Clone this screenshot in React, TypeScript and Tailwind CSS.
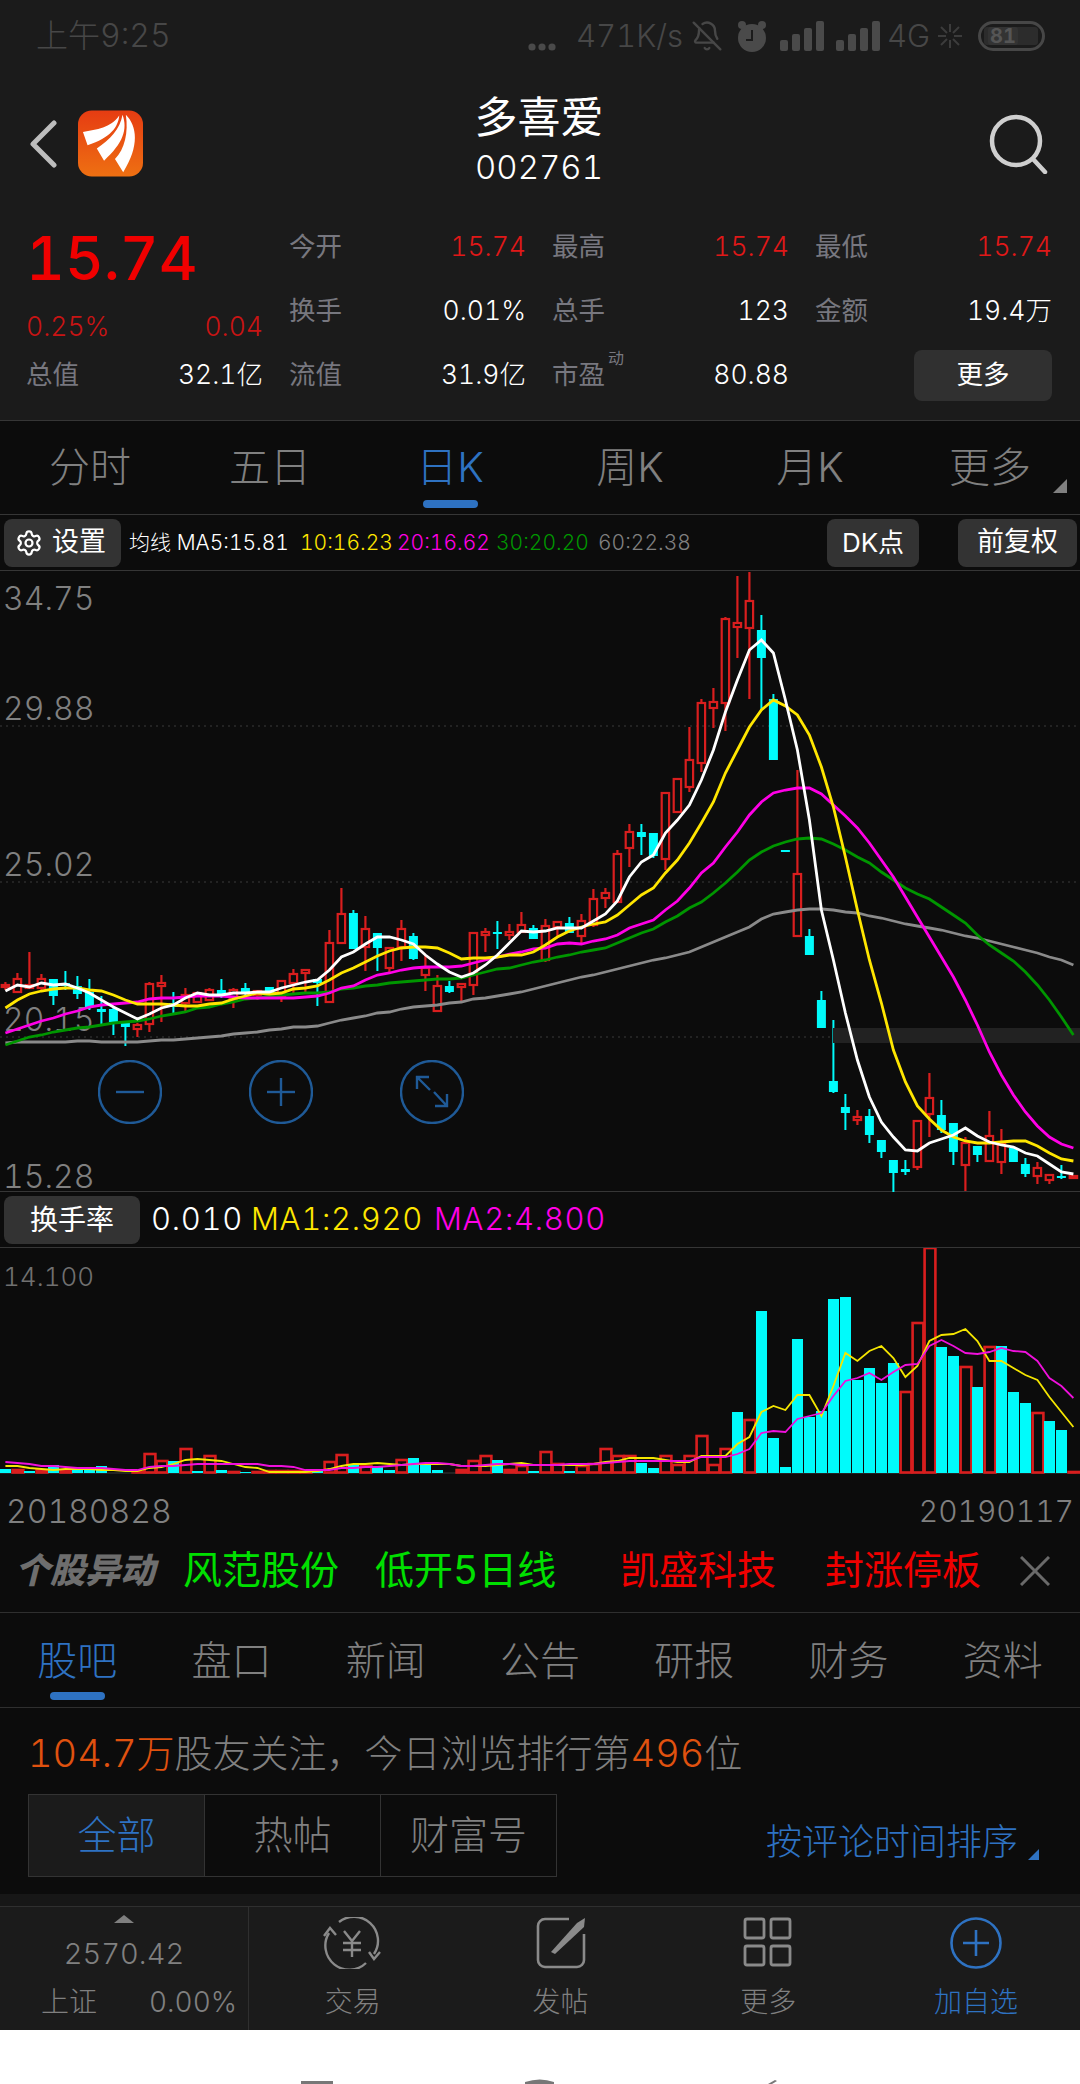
import { BellOff, Settings } from 'lucide-react';

// [high, bodyTop, bodyBottom, low, isRed]
const candles: [number, number, number, number, number][] = [
  [982, 985, 987, 990, 1], [973, 979, 992, 992, 1], [952, 985, 988, 989, 1], [974, 979, 988, 990, 1], [979, 979, 996, 1005, 0],
  [971, 983, 986, 990, 0], [976, 986, 994, 999, 0], [979, 992, 1007, 1010, 0], [996, 1009, 1012, 1024, 0], [1008, 1009, 1022, 1035, 0],
  [1023, 1023, 1027, 1046, 0], [1023, 1025, 1029, 1037, 1], [982, 984, 1024, 1032, 1], [975, 983, 986, 1022, 1], [992, 1003, 1007, 1014, 0],
  [988, 995, 1003, 1012, 1], [993, 993, 1002, 1003, 1], [988, 990, 1000, 1001, 1], [979, 990, 995, 998, 0], [988, 990, 1000, 1008, 1],
  [983, 988, 993, 995, 0], [990, 991, 995, 1000, 1], [987, 987, 993, 995, 0], [981, 981, 997, 1002, 1], [969, 974, 983, 993, 1],
  [970, 970, 973, 993, 1], [979, 979, 983, 1006, 0], [930, 943, 1002, 1003, 1], [888, 914, 943, 944, 1], [910, 913, 949, 949, 0],
  [916, 929, 947, 971, 1], [933, 933, 948, 971, 0], [947, 948, 968, 972, 1], [920, 929, 947, 961, 1], [933, 936, 959, 960, 0],
  [955, 968, 975, 991, 1], [975, 986, 1011, 1012, 1], [981, 986, 992, 993, 0], [984, 984, 987, 1001, 1], [933, 933, 985, 995, 1],
  [928, 932, 935, 952, 1], [921, 932, 934, 949, 0], [924, 932, 935, 940, 1], [912, 925, 932, 933, 1], [925, 928, 939, 939, 0],
  [919, 926, 960, 962, 1], [921, 922, 927, 938, 1], [917, 923, 933, 933, 0], [914, 921, 936, 943, 1], [889, 899, 925, 927, 1],
  [888, 893, 898, 908, 1], [850, 854, 902, 902, 1], [824, 832, 848, 867, 1], [824, 832, 837, 855, 0], [833, 833, 856, 858, 0],
  [793, 793, 859, 870, 1], [778, 779, 812, 812, 1], [727, 760, 787, 792, 1], [699, 703, 763, 772, 1], [688, 702, 708, 728, 1],
  [617, 619, 703, 731, 1], [576, 623, 627, 658, 1], [572, 601, 628, 699, 1], [615, 630, 658, 710, 0], [694, 699, 760, 760, 0],
  [850, 850, 852, 852, 0], [770, 874, 936, 936, 1], [929, 936, 955, 955, 0], [991, 1000, 1028, 1028, 0], [1020, 1081, 1092, 1093, 0],
  [1094, 1107, 1113, 1130, 0], [1110, 1117, 1120, 1125, 1], [1109, 1116, 1135, 1143, 0], [1140, 1140, 1152, 1158, 0], [1160, 1160, 1173, 1192, 0],
  [1160, 1169, 1172, 1175, 0], [1121, 1121, 1167, 1170, 1], [1073, 1098, 1114, 1137, 1], [1100, 1115, 1130, 1133, 0], [1123, 1123, 1152, 1165, 0],
  [1137, 1143, 1165, 1191, 1], [1146, 1146, 1155, 1162, 0], [1111, 1136, 1161, 1162, 1], [1129, 1144, 1162, 1174, 1], [1148, 1148, 1162, 1162, 0],
  [1158, 1164, 1174, 1177, 0], [1162, 1168, 1176, 1184, 1], [1175, 1175, 1180, 1184, 1], [1165, 1176, 1178, 1179, 0], [1176, 1176, 1178, 1178, 1],
];

const ma5 = [
  991, 985, 987, 983, 985, 984, 988, 993, 1000, 1007, 1013, 1019, 1014, 1008, 1005, 998, 993, 995, 995, 993, 993, 992, 992, 988, 985, 982, 980, 970, 957, 952, 944, 937, 937, 940, 944, 955, 964, 972, 977, 973, 965, 955, 943, 931, 932,
  931, 928, 928, 928, 921, 914, 901, 877, 862, 855, 833, 820, 805, 780, 750, 712, 680, 650, 640, 653, 700, 750, 820, 910, 960, 1013, 1060, 1097, 1122, 1137, 1150, 1151, 1143, 1139, 1135, 1128, 1136, 1142, 1145, 1147, 1153, 1156, 1164, 1172, 1174,
];
const ma10 = [
  1008, 1000, 994, 991, 989, 988, 988, 990, 991, 995, 1000, 1004, 1004, 1004, 1005, 1006, 1006, 1004, 1003, 999, 996, 993, 994, 993, 989, 988, 986, 980, 973, 968, 962, 956, 951, 948, 947, 947, 948, 953, 959, 958, 958, 957, 955, 955, 952,
  945, 937, 931, 927, 924, 922, 915, 905, 895, 888, 873, 860, 843, 823, 802, 773, 750, 727, 710, 700, 706, 715, 735, 767, 807, 857, 910, 960, 1003, 1050, 1082, 1106, 1119, 1130, 1137, 1141, 1143, 1143, 1142, 1141, 1141, 1146, 1153, 1159, 1161,
];
const ma20 = [
  1033, 1029, 1025, 1021, 1018, 1014, 1011, 1007, 1005, 1004, 1003, 1002, 999, 998, 998, 997, 996, 996, 996, 997, 998, 998, 998, 998, 998, 997, 996, 993, 988, 986, 980, 975, 973, 970, 968, 967, 967, 967, 966, 963, 960, 957, 954, 952, 949,
  948, 944, 943, 944, 941, 939, 935, 928, 924, 920, 910, 901, 888, 873, 863, 847, 832, 815, 802, 793, 790, 788, 788, 794, 805, 816, 828, 843, 860, 877, 897, 917, 937, 957, 977, 1000, 1025, 1052, 1075, 1095, 1112, 1126, 1137, 1144, 1148,
];
const ma30 = [
  1045, 1041, 1037, 1035, 1032, 1030, 1028, 1027, 1025, 1023, 1022, 1021, 1019, 1016, 1014, 1012, 1008, 1007, 1004, 1002, 999, 998, 996, 995, 994, 993, 993, 992, 989, 988, 986, 985, 983, 982, 981, 980, 979, 979, 978, 975, 972, 969, 968, 965, 962,
  960, 957, 955, 952, 950, 948, 943, 938, 933, 929, 922, 916, 908, 902, 893, 883, 872, 860, 852, 846, 842, 839, 838, 839, 844, 850, 857, 863, 872, 880, 888, 894, 899, 907, 915, 923, 935, 945, 953, 961, 972, 985, 1000, 1017, 1035,
];
const ma60 = [
  1043, 1042, 1042, 1042, 1042, 1042, 1041, 1041, 1042, 1042, 1042, 1042, 1041, 1040, 1040, 1039, 1038, 1037, 1036, 1034, 1033, 1032, 1030, 1029, 1027, 1027, 1026, 1023, 1020, 1018, 1016, 1013, 1012, 1009, 1007, 1006, 1005, 1003, 1002, 999, 998, 996, 994, 992, 989,
  986, 983, 980, 977, 975, 972, 969, 966, 963, 960, 958, 955, 952, 947, 942, 937, 932, 927, 919, 914, 912, 910, 909, 909, 910, 912, 913, 916, 918, 921, 924, 926, 928, 930, 933, 936, 938, 941, 944, 947, 950, 953, 957, 960, 965,
];

// [top, isRed] - turnover bars
const bars: [number, number][] = [
  [1470, 0], [1471, 1], [1472, 0], [1471, 1], [1466, 0], [1472, 1], [1470, 0], [1470, 0], [1467, 0], [1474, 0], [1474, 0], [1473, 1], [1455, 1], [1462, 1], [1462, 0],
  [1450, 1], [1472, 0], [1457, 1], [1471, 0], [1473, 1], [1473, 0], [1473, 1], [1472, 1], [1472, 1], [1472, 1], [1472, 1], [1472, 0], [1463, 1], [1456, 1], [1466, 0],
  [1467, 1], [1467, 0], [1471, 0], [1461, 1], [1459, 0], [1465, 0], [1471, 0], [1474, 0], [1471, 1], [1462, 1], [1457, 1], [1461, 0], [1471, 1], [1467, 1], [1472, 0],
  [1453, 1], [1465, 1], [1472, 0], [1467, 1], [1465, 1], [1450, 1], [1457, 1], [1457, 1], [1464, 0], [1469, 0], [1457, 1], [1466, 1], [1457, 1], [1437, 1], [1466, 1],
  [1450, 1], [1413, 0], [1421, 1], [1312, 0], [1439, 0], [1468, 0], [1340, 0], [1418, 0], [1412, 0], [1300, 0], [1298, 0], [1381, 0], [1369, 0], [1384, 0], [1364, 0],
  [1393, 1], [1324, 1], [1249, 1], [1348, 0], [1357, 0], [1368, 1], [1388, 0], [1348, 1], [1347, 0], [1393, 0], [1404, 0], [1414, 1], [1422, 0], [1431, 0], [1473, 1],
];
const volMa1 = [
  1467, 1467, 1469, 1470, 1471, 1470, 1470, 1470, 1471, 1471, 1472, 1472, 1469, 1468, 1465, 1461, 1460, 1461, 1462, 1465, 1468, 1469, 1473, 1473, 1473, 1473, 1472, 1470, 1467, 1465, 1465, 1464, 1465, 1466, 1465, 1465, 1465, 1465, 1467, 1467, 1467, 1466, 1465, 1464, 1466,
  1466, 1466, 1466, 1466, 1465, 1463, 1462, 1459, 1459, 1459, 1461, 1463, 1463, 1457, 1457, 1457, 1445, 1438, 1413, 1407, 1411, 1396, 1396, 1417, 1387, 1354, 1362, 1352, 1347, 1359, 1378, 1367, 1342, 1336, 1335, 1330, 1342, 1362, 1362, 1369, 1376, 1381, 1398, 1413, 1428,
];
const volMa2 = [
  1463, 1464, 1465, 1467, 1467, 1468, 1469, 1469, 1469, 1470, 1471, 1471, 1468, 1467, 1467, 1466, 1465, 1465, 1465, 1465, 1465, 1465, 1467, 1467, 1468, 1471, 1471, 1471, 1469, 1469, 1468, 1468, 1467, 1466, 1465, 1464, 1464, 1465, 1467, 1467, 1466, 1465, 1465, 1466, 1466,
  1466, 1466, 1465, 1465, 1465, 1464, 1463, 1462, 1462, 1462, 1462, 1462, 1462, 1458, 1458, 1458, 1455, 1450, 1434, 1432, 1433, 1420, 1417, 1414, 1397, 1382, 1379, 1374, 1381, 1373, 1366, 1365, 1347, 1341, 1347, 1354, 1355, 1353, 1349, 1352, 1353, 1362, 1379, 1387, 1399,
];

const xAt = (i: number) => 5.4 + 12 * i;
const toPoints = (ys: number[]) => ys.map((y, i) => `${xAt(i)},${y}`).join(' ');

const RED = '#d91e1e';
const CYAN = '#00fbfb';

function KChart() {
  return (
    <svg className="absolute inset-0" width={1080} height={621} viewBox="0 571 1080 621">
      {[726, 882].map((y) => (
        <line key={y} x1={0} x2={1080} y1={y} y2={y} stroke="#3a3a3a" strokeDasharray="2 4" />
      ))}
      <line x1={0} x2={833} y1={1037} y2={1037} stroke="#3a3a3a" strokeDasharray="2 4" />
      {candles.map(([high, top, bottom, low, isRed], i) => {
        const x = xAt(i);
        if (!isRed) {
          return (
            <g key={i}>
              <line x1={x} x2={x} y1={high} y2={low} stroke={CYAN} strokeWidth={2} />
              <rect x={x - 4.5} y={top} width={9} height={Math.max(bottom - top, 2)} fill={CYAN} />
            </g>
          );
        }
        return (
          <g key={i} stroke={RED} strokeWidth={2.2} fill="none">
            <line x1={x} x2={x} y1={high} y2={top} />
            <line x1={x} x2={x} y1={bottom} y2={low} />
            <rect x={x - 3.7} y={top} width={7.4} height={bottom - top} />
          </g>
        );
      })}
      <rect x={833} y={1028} width={247} height={15} fill="#222222" />
      <polyline points={toPoints(ma60)} fill="none" stroke="#8a8a8a" strokeWidth={2.8} />
      <polyline points={toPoints(ma30)} fill="none" stroke="#009600" strokeWidth={2.8} />
      <polyline points={toPoints(ma20)} fill="none" stroke="#ff00e6" strokeWidth={2.8} />
      <polyline points={toPoints(ma10)} fill="none" stroke="#ffe600" strokeWidth={2.8} />
      <polyline points={toPoints(ma5)} fill="none" stroke="#ffffff" strokeWidth={2.8} />
    </svg>
  );
}

function VolumeChart() {
  return (
    <svg className="absolute inset-0" width={1080} height={246} viewBox="0 1249 1080 246">
      <line x1={0} x2={1076} y1={1474} y2={1474} stroke="#3a3a3a" />
      {bars.map(([top, isRed], i) => {
        const x = xAt(i);
        if (top >= 1474) return null;
        if (!isRed) return <rect key={i} x={x - 5.4} y={top} width={11} height={1474 - top} fill={CYAN} />;
        return (
          <rect
            key={i}
            x={x - 4.8}
            y={top}
            width={10.8}
            height={1473.5 - top}
            fill={1473.5 - top < 3 ? RED : 'none'}
            stroke={RED}
            strokeWidth={2.6}
          />
        );
      })}
      <polyline points={toPoints(volMa1)} fill="none" stroke="#f5e600" strokeWidth={1.8} />
      <polyline points={toPoints(volMa2)} fill="none" stroke="#f010dc" strokeWidth={1.8} />
    </svg>
  );
}

function Logo() {
  return (
    <svg width={65} height={67} viewBox="233 43 197 200">
      <defs>
        <linearGradient id="logoFill" x1="0" y1="0" x2="0" y2="1">
          <stop offset="0" stopColor="#e63c12" />
          <stop offset="1" stopColor="#ee7012" />
        </linearGradient>
      </defs>
      <rect x={233} y={43} width={197} height={200} rx={42} fill="url(#logoFill)" />
      <path d="M248 108 C290 100 332 96 358 58 C355 92 332 126 262 148 Z" fill="#fff" />
      <path d="M290 158 C330 132 360 100 368 56 C384 100 370 142 312 195 Z" fill="#fff" />
      <path d="M345 190 C375 160 386 110 378 56 C412 90 420 150 370 230 Z" fill="#fff" />
    </svg>
  );
}

function StatusBar() {
  return (
    <div className="flex h-[72px] items-center text-[32px] font-light text-[#474747]">
      <span className="ml-[36px]">上午9:25</span>
      <span className="ml-auto flex items-center">
        <svg width={28} height={8} viewBox="0 0 28 8" className="mt-[22px]">
          <circle cx={4} cy={4} r={3.6} fill="#4a4a4a" />
          <circle cx={14} cy={4} r={3.6} fill="#4a4a4a" />
          <circle cx={24} cy={4} r={3.6} fill="#4a4a4a" />
        </svg>
        <span className="ml-[20px] w-[105px] text-[31px] whitespace-nowrap">471K/s</span>
        <BellOff size={32} strokeWidth={1.8} className="ml-[10px]" color="#474747" />
        <svg width={30} height={32} viewBox="0 0 30 32" className="ml-[14px]">
          <circle cx={15} cy={18} r={14} fill="#4a4a4a" />
          <circle cx={5} cy={5} r={4} fill="#4a4a4a" />
          <circle cx={25} cy={5} r={4} fill="#4a4a4a" />
          <path d="M15 10 V20 H9" fill="none" stroke="#1b1b1b" strokeWidth={2} />
        </svg>
        <svg width={44} height={30} viewBox="0 0 44 30" className="ml-[13px]" fill="#4a4a4a">
          <rect x={0} y={19} width={8} height={11} rx={2} />
          <rect x={12} y={13} width={8} height={17} rx={2} />
          <rect x={24} y={7} width={8} height={23} rx={2} />
          <rect x={36} y={0} width={8} height={30} rx={2} />
        </svg>
        <svg width={44} height={30} viewBox="0 0 44 30" className="ml-[12px]" fill="#4a4a4a">
          <rect x={0} y={19} width={8} height={11} rx={2} />
          <rect x={12} y={13} width={8} height={17} rx={2} />
          <rect x={24} y={7} width={8} height={23} rx={2} />
          <rect x={36} y={0} width={8} height={30} rx={2} />
        </svg>
        <span className="ml-[7px] w-[44px] text-[31px]">4G</span>
        <svg width={26} height={26} viewBox="0 0 26 26" className="ml-[6px]" stroke="#3c3c3c" strokeWidth={2}>
          <line x1={13} y1={1} x2={13} y2={9} />
          <line x1={13} y1={17} x2={13} y2={25} />
          <line x1={1} y1={13} x2={9} y2={13} />
          <line x1={17} y1={13} x2={25} y2={13} />
          <line x1={4} y1={4} x2={10} y2={10} />
          <line x1={16} y1={16} x2={22} y2={22} />
          <line x1={22} y1={4} x2={16} y2={10} />
          <line x1={10} y1={16} x2={4} y2={22} />
        </svg>
        <span className="mr-[35px] ml-[15px] flex h-[30px] w-[67px] items-center rounded-full border-[3px] border-[#474747] p-[3px]">
          <span className="flex h-[18px] w-[54px] items-center rounded-[3px] bg-[#2c2c2c]">
            <span className="ml-[4px] flex h-full w-[30px] items-center justify-center rounded-[3px] bg-[#333333] text-[20px] font-bold text-[#555555]">
              81
            </span>
          </span>
        </span>
      </span>
    </div>
  );
}

function Stat({ label, value, color = 'text-white', sup }: { label: string; value: string; color?: string; sup?: string }) {
  return (
    <div className="flex items-center justify-between">
      <span className="relative text-[#77777f]">
        {label}
        {sup && <span className="absolute -top-[9px] -right-[19px] text-[16px]">{sup}</span>}
      </span>
      <span className={`font-light ${color}`}>{value}</span>
    </div>
  );
}

function Quote() {
  return (
    <div className="grid grid-cols-[237px_237px_237px_237px] grid-rows-[64px_64px_64px] gap-x-[26px] pl-[26px] text-[26.5px]">
      <div className="row-span-2 flex flex-col">
        <span className="mt-[9px] text-[60px] leading-[68px] font-medium text-[#f00000]">15.74</span>
        <div className="mt-[15px] flex justify-between text-[#c81414]">
          <span className="font-light">0.25%</span>
          <span className="font-light">0.04</span>
        </div>
      </div>
      <Stat label="今开" value="15.74" color="text-[#e01818]" />
      <Stat label="最高" value="15.74" color="text-[#e01818]" />
      <Stat label="最低" value="15.74" color="text-[#e01818]" />
      <Stat label="换手" value="0.01%" />
      <Stat label="总手" value="123" />
      <Stat label="金额" value="19.4万" />
      <Stat label="总值" value="32.1亿" />
      <Stat label="流值" value="31.9亿" />
      <Stat label="市盈" sup="动" value="80.88" />
      <div className="flex items-center justify-end">
        <button className="h-[51px] w-[138px] rounded-[8px] bg-[#303030] text-white">更多</button>
      </div>
    </div>
  );
}

function KTabs() {
  const tabs = ['分时', '五日', '日K', '周K', '月K', '更多'];
  return (
    <div className="flex h-[95px] border-t border-b border-[#363636]">
      {tabs.map((tab) => (
        <div key={tab} className="relative flex flex-1 flex-col items-center">
          <span className={`mt-[23px] text-[41px] leading-[46px] font-light ${tab === '日K' ? 'text-[#2e72c2]' : 'text-[#808080]'}`}>{tab}</span>
          {tab === '日K' && <span className="mt-[10px] h-[8px] w-[55px] rounded-full bg-[#2e72c2]" />}
          {tab === '更多' && (
            <svg width={14} height={14} viewBox="0 0 14 14" className="absolute top-[58px] right-[13px]">
              <polygon points="14,0 14,14 0,14" fill="#808080" />
            </svg>
          )}
        </div>
      ))}
    </div>
  );
}

function MaBar() {
  return (
    <div className="flex h-[56px] items-center border-b border-[#363636] pr-[3px] pl-[4px]">
      <button className="flex h-[48px] w-[117px] items-center rounded-[8px] bg-[#333333] pl-[11px] text-[27px] text-white">
        <Settings size={28} strokeWidth={1.9} />
        <span className="ml-[9px]">设置</span>
      </button>
      <div className="ml-[8px] flex text-[21px] font-light whitespace-nowrap">
        <span className="w-[171px] text-white">均线 MA5:15.81</span>
        <span className="w-[97px] text-[#ffe600]">10:16.23</span>
        <span className="w-[99px] text-[#ff00e6]">20:16.62</span>
        <span className="w-[102px] text-[#009600]">30:20.20</span>
        <span className="text-[#808080]">60:22.38</span>
      </div>
      <button className="ml-auto h-[48px] w-[92px] rounded-[8px] bg-[#333333] text-[26px] text-white">DK点</button>
      <button className="ml-[39px] h-[48px] w-[119px] rounded-[8px] bg-[#333333] text-[27px] text-white">前复权</button>
    </div>
  );
}

function ZoomButtons() {
  return (
    <div className="absolute top-[489px] left-[98px] flex gap-[87px]">
      {['minus', 'plus', 'fit'].map((name) => (
        <svg key={name} width={64} height={64} viewBox="0 0 64 64" fill="none" stroke="#1f5a97" strokeWidth={2.4}>
          <circle cx={32} cy={32} r={31} />
          {name !== 'fit' && <line x1={18} x2={46} y1={32} y2={32} />}
          {name === 'plus' && <line x1={32} x2={32} y1={18} y2={46} />}
          {name === 'fit' && <path d="M17 17 L30 30 M17 29 V17 H29 M34 32 L47 46 M47 34 V46 H35" />}
        </svg>
      ))}
    </div>
  );
}

function Ticker() {
  return (
    <div className="flex h-[84px] items-center border-b border-[#2f2f2f] text-[39px] whitespace-nowrap">
      <span className="ml-[15px] w-[168px] text-[35px] font-black text-[#6e6e6e] italic">个股异动</span>
      <span className="w-[192px] text-[#00e000]">风范股份</span>
      <span className="w-[245px] text-[#00e000]">低开5日线</span>
      <span className="w-[205px] text-[#f00000]">凯盛科技</span>
      <span className="w-[195px] text-[#f00000]">封涨停板</span>
      <svg width={30} height={30} viewBox="0 0 30 30" stroke="#6a6a6a" strokeWidth={3}>
        <line x1={1} y1={1} x2={29} y2={29} />
        <line x1={29} y1={1} x2={1} y2={29} />
      </svg>
    </div>
  );
}

function NewsTabs() {
  const tabs = ['股吧', '盘口', '新闻', '公告', '研报', '财务', '资料'];
  return (
    <div className="flex h-[95px] border-b border-[#2f2f2f]">
      {tabs.map((tab, i) => (
        <div key={tab} className="flex flex-1 flex-col items-center">
          <span className={`mt-[25px] text-[40px] leading-[46px] font-light ${i === 0 ? 'text-[#2e72c2]' : 'text-[#808080]'}`}>{tab}</span>
          {i === 0 && <span className="mt-[8px] h-[8px] w-[55px] rounded-full bg-[#2e72c2]" />}
        </div>
      ))}
    </div>
  );
}

function Community() {
  return (
    <div className="h-[186px] pl-[28px]">
      <div className="pt-[22px] text-[38px] leading-[46px] font-light whitespace-nowrap text-[#808080]">
        <span className="text-[#e0520f]">104.7万</span>股友关注，今日浏览排行第<span className="text-[#e0520f]">496</span>位
      </div>
      <div className="mt-[18px] flex items-center">
        <div className="flex h-[83px] w-[529px] border border-[#333333] text-[39px] font-light text-[#808080]">
          <span className="flex flex-1 items-center justify-center bg-[#1b1b1b] text-[#2e72c2]">全部</span>
          <span className="flex flex-1 items-center justify-center border-x border-[#333333]">热帖</span>
          <span className="flex flex-1 items-center justify-center">财富号</span>
        </div>
        <span className="mt-[12px] ml-[209px] text-[36px] font-light whitespace-nowrap text-[#2e72c2]">按评论时间排序</span>
        <svg width={11} height={11} viewBox="0 0 11 11" className="mt-[38px] ml-[10px]">
          <polygon points="11,0 11,11 0,11" fill="#2e72c2" />
        </svg>
      </div>
    </div>
  );
}

function TradeIcon() {
  return (
    <svg width={60} height={52} viewBox="0 0 60 52" fill="none" stroke="#8a8a8a" strokeWidth={2.4}>
      <path d="M16 5 A24 24 0 0 1 51 37" />
      <path d="M46 35 L51 42 L57 35" />
      <path d="M43 46 A24 24 0 0 1 6 16" />
      <path d="M1 19 L7 11 L13 18" />
      <path d="M21 14 L29 24 L37 14 M29 24 V40 M20 26 H38 M20 33 H38" />
    </svg>
  );
}

function PostIcon() {
  return (
    <svg width={50} height={52} viewBox="0 0 50 52" fill="none" stroke="#8a8a8a" strokeWidth={2.6}>
      <path d="M33 2 H9 A7 7 0 0 0 2 9 V43 A7 7 0 0 0 9 50 H41 A7 7 0 0 0 48 43 V17" />
      <polygon points="15,35 41,6 49,1 48,10 19,37" fill="#8a8a8a" stroke="none" />
    </svg>
  );
}

function GridIcon() {
  return (
    <svg width={50} height={52} viewBox="0 0 50 52" fill="none" stroke="#8a8a8a" strokeWidth={2.8}>
      <rect x={2} y={2} width={19} height={19} rx={2} />
      <rect x={28} y={2} width={19} height={19} rx={2} />
      <rect x={2} y={29} width={19} height={19} rx={2} />
      <rect x={28} y={29} width={19} height={19} rx={2} />
    </svg>
  );
}

function AddIcon() {
  return (
    <svg width={52} height={52} viewBox="0 0 52 52" fill="none" stroke="#2e72c2" strokeWidth={2.6}>
      <circle cx={26} cy={26} r={24.5} />
      <path d="M13 26 H39 M26 13 V39" />
    </svg>
  );
}

function BottomBar() {
  const actions = [
    { label: '交易', icon: <TradeIcon /> },
    { label: '发帖', icon: <PostIcon /> },
    { label: '更多', icon: <GridIcon /> },
    { label: '加自选', icon: <AddIcon />, active: true },
  ];
  return (
    <div className="flex h-[124px] border-t border-[#2f2f2f] bg-[#1b1b1b]">
      <div className="flex w-[249px] flex-col items-center border-r border-[#2f2f2f] text-[28px] font-light text-[#808080]">
        <svg width={20} height={8} viewBox="0 0 20 8" className="mt-[8px]">
          <polygon points="10,0 20,8 0,8" fill="#808080" />
        </svg>
        <span className="mt-[9px] text-[29px] leading-[44px]">2570.42</span>
        <div className="mt-[5px] flex w-full justify-between pr-[11px] pl-[41px]">
          <span>上证</span>
          <span>0.00%</span>
        </div>
      </div>
      {actions.map((action) => (
        <div key={action.label} className="flex flex-1 flex-col items-center pt-[10px]">
          <div className="flex h-[52px] items-center">{action.icon}</div>
          <span className={`mt-[16px] text-[28px] leading-[34px] font-light ${action.active ? 'text-[#2e72c2]' : 'text-[#808080]'}`}>{action.label}</span>
        </div>
      ))}
    </div>
  );
}

export default function App() {
  return (
    <div className="flex h-[2084px] w-[1080px] flex-col overflow-hidden bg-white font-['Inter','Noto_Sans_CJK_SC',sans-serif] tabular-nums">
      <div className="h-[420px] bg-[#1b1b1b]">
        <StatusBar />
        <div className="flex h-[143px] items-center">
          <div className="flex flex-1 items-center pl-[30px]">
            <svg width={27} height={48} viewBox="0 0 27 48" fill="none" stroke="#bdbdbd" strokeWidth={5} strokeLinecap="round" strokeLinejoin="round">
              <path d="M24 3 L3 24 L24 45" />
            </svg>
            <span className="ml-[21px]">
              <Logo />
            </span>
          </div>
          <div className="-mt-[6px] flex flex-col items-center text-white">
            <span className="text-[43px] leading-[52px]">多喜爱</span>
            <span className="text-[33px] leading-[48px] font-light">002761</span>
          </div>
          <div className="flex flex-1 justify-end pr-[32px]">
            <svg width={60} height={60} viewBox="0 0 60 60" fill="none" stroke="#cfcfcf" strokeWidth={4.5}>
              <circle cx={28} cy={27} r={24} />
              <path d="M45 45 L57 58" strokeLinecap="round" />
            </svg>
          </div>
        </div>
        <Quote />
      </div>

      <div className="bg-[#0c0c0c]">
        <KTabs />
        <MaBar />
        <div className="relative h-[621px] border-b border-[#363636]">
          <span className="absolute top-[12px] left-[3px] text-[32px] leading-none font-light text-[#808080]">34.75</span>
          <span className="absolute top-[122px] left-[3px] text-[32px] leading-none font-light text-[#808080]">29.88</span>
          <span className="absolute top-[278px] left-[3px] text-[32px] leading-none font-light text-[#808080]">25.02</span>
          <span className="absolute top-[433px] left-[3px] text-[32px] leading-none font-light text-[#808080]">20.15</span>
          <span className="absolute top-[590px] left-[3px] text-[32px] leading-none font-light text-[#808080]">15.28</span>
          <KChart />
          <ZoomButtons />
        </div>
        <div className="flex h-[56px] items-center border-b border-[#363636] pl-[4px] text-[31px] font-light tracking-[0.7px] whitespace-nowrap">
          <button className="h-[48px] w-[136px] rounded-[8px] bg-[#333333] text-[28px] font-normal tracking-normal text-white">换手率</button>
          <span className="ml-[11px] w-[100px] text-white">0.010</span>
          <span className="w-[183px] text-[#ffe600]">MA1:2.920</span>
          <span className="text-[#ff00e6]">MA2:4.800</span>
        </div>
        <div className="relative h-[246px]">
          <span className="absolute top-[16px] left-[3px] text-[26px] leading-none font-light text-[#707070]">14.100</span>
          <VolumeChart />
        </div>
        <div className="flex h-[35px] items-center justify-between px-[6px] text-[32px] font-light text-[#808080]">
          <span>20180828</span>
          <span className="text-[30px]">20190117</span>
        </div>
        <Ticker />
        <NewsTabs />
        <Community />
      </div>

      <div className="h-[12px] bg-[#171717]" />
      <BottomBar />

      <svg width={1080} height={54} viewBox="0 0 1080 54" className="block" fill="#777777">
        <rect x={301} y={51} width={32} height={3} />
        <path d="M525 54 V52 Q540 47 554 52 V54 Z" />
        <path d="M768 54 L775 50 L777 51 L772 54 Z" />
      </svg>
    </div>
  );
}
